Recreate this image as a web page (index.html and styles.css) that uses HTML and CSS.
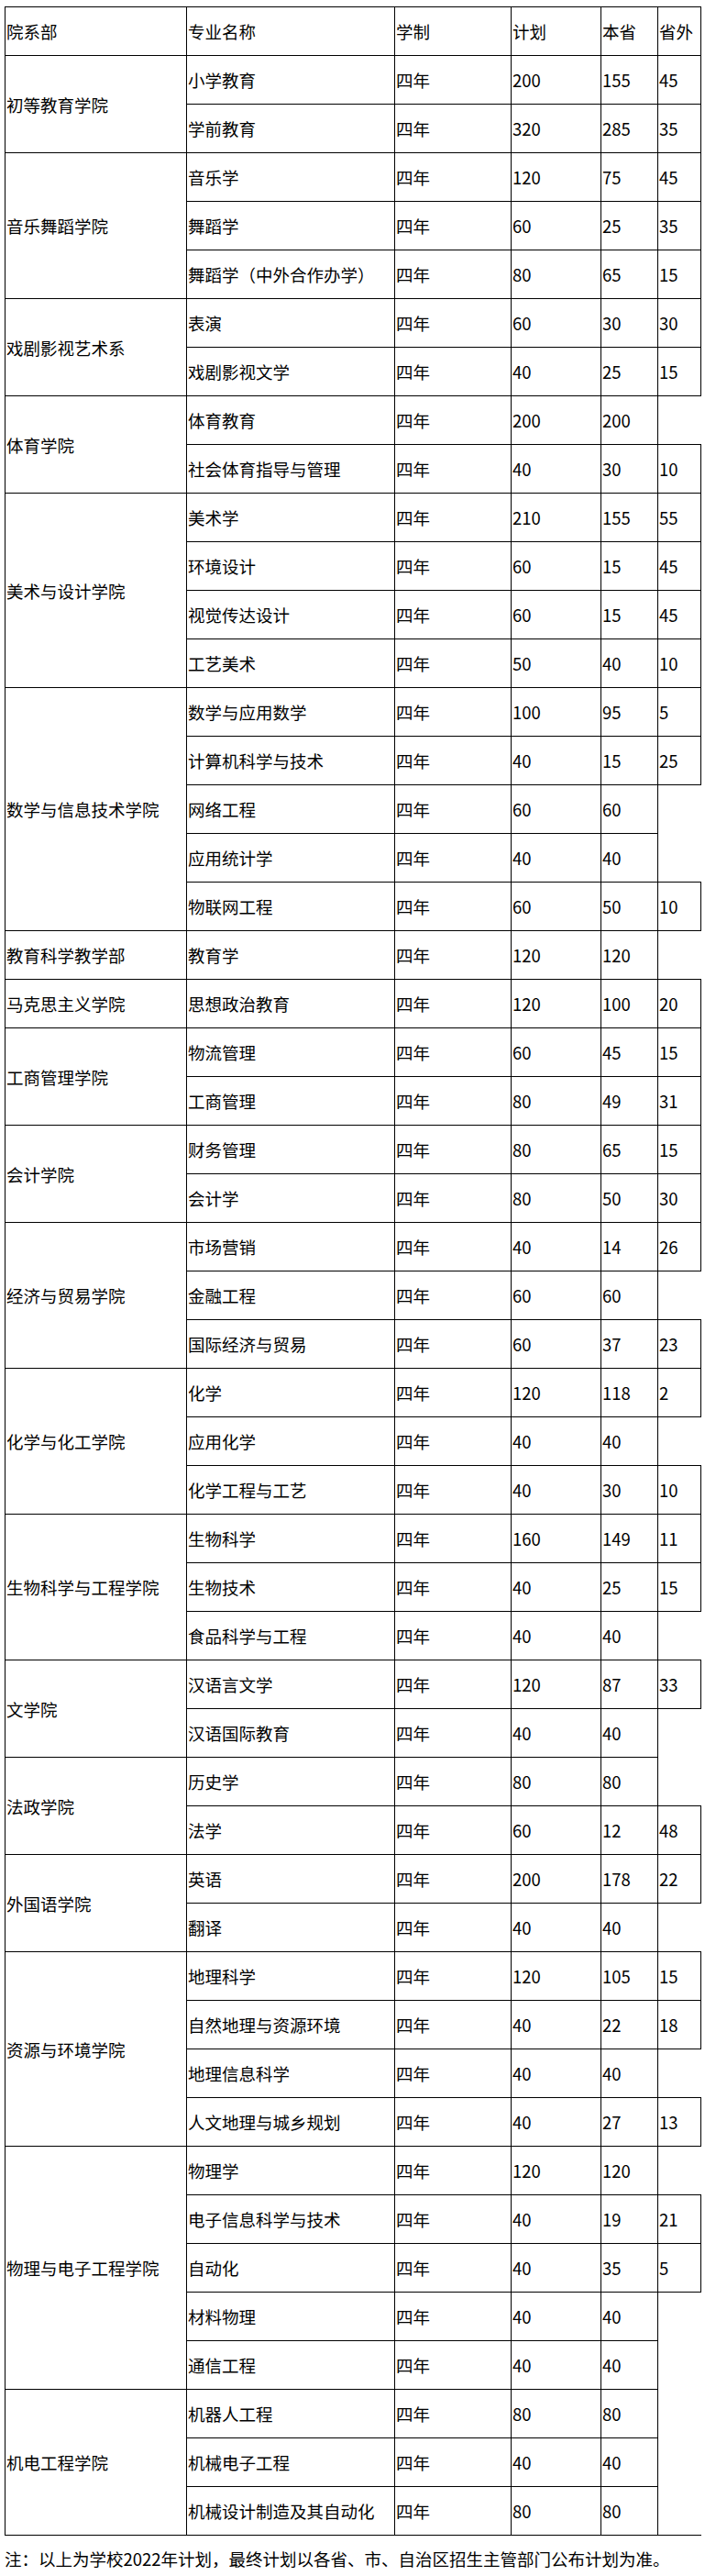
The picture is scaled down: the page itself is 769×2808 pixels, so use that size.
FILE: index.html
```html
<!DOCTYPE html>
<html lang="zh-CN">
<head>
<meta charset="utf-8">
<title>招生计划</title>
<link rel="stylesheet" href="styles.css">
</head>
<body>
<table class="plan">
<colgroup>
<col class="c1"><col class="c2"><col class="c3"><col class="c4"><col class="c5"><col class="c6">
</colgroup>
<tbody>
<tr><td>院系部</td><td>专业名称</td><td>学制</td><td>计划</td><td>本省</td><td>省外</td></tr>
<tr><td rowspan="2">初等教育学院</td><td>小学教育</td><td>四年</td><td>200</td><td>155</td><td>45</td></tr>
<tr><td>学前教育</td><td>四年</td><td>320</td><td>285</td><td>35</td></tr>
<tr><td rowspan="3">音乐舞蹈学院</td><td>音乐学</td><td>四年</td><td>120</td><td>75</td><td>45</td></tr>
<tr><td>舞蹈学</td><td>四年</td><td>60</td><td>25</td><td>35</td></tr>
<tr><td>舞蹈学（中外合作办学）</td><td>四年</td><td>80</td><td>65</td><td>15</td></tr>
<tr><td rowspan="2">戏剧影视艺术系</td><td>表演</td><td>四年</td><td>60</td><td>30</td><td>30</td></tr>
<tr><td>戏剧影视文学</td><td>四年</td><td>40</td><td>25</td><td>15</td></tr>
<tr><td rowspan="2">体育学院</td><td>体育教育</td><td>四年</td><td>200</td><td>200</td></tr>
<tr><td>社会体育指导与管理</td><td>四年</td><td>40</td><td>30</td><td>10</td></tr>
<tr><td rowspan="4">美术与设计学院</td><td>美术学</td><td>四年</td><td>210</td><td>155</td><td>55</td></tr>
<tr><td>环境设计</td><td>四年</td><td>60</td><td>15</td><td>45</td></tr>
<tr><td>视觉传达设计</td><td>四年</td><td>60</td><td>15</td><td>45</td></tr>
<tr><td>工艺美术</td><td>四年</td><td>50</td><td>40</td><td>10</td></tr>
<tr><td rowspan="5">数学与信息技术学院</td><td>数学与应用数学</td><td>四年</td><td>100</td><td>95</td><td>5</td></tr>
<tr><td>计算机科学与技术</td><td>四年</td><td>40</td><td>15</td><td>25</td></tr>
<tr><td>网络工程</td><td>四年</td><td>60</td><td>60</td></tr>
<tr><td>应用统计学</td><td>四年</td><td>40</td><td>40</td></tr>
<tr><td>物联网工程</td><td>四年</td><td>60</td><td>50</td><td>10</td></tr>
<tr><td>教育科学教学部</td><td>教育学</td><td>四年</td><td>120</td><td>120</td></tr>
<tr><td>马克思主义学院</td><td>思想政治教育</td><td>四年</td><td>120</td><td>100</td><td>20</td></tr>
<tr><td rowspan="2">工商管理学院</td><td>物流管理</td><td>四年</td><td>60</td><td>45</td><td>15</td></tr>
<tr><td>工商管理</td><td>四年</td><td>80</td><td>49</td><td>31</td></tr>
<tr><td rowspan="2">会计学院</td><td>财务管理</td><td>四年</td><td>80</td><td>65</td><td>15</td></tr>
<tr><td>会计学</td><td>四年</td><td>80</td><td>50</td><td>30</td></tr>
<tr><td rowspan="3">经济与贸易学院</td><td>市场营销</td><td>四年</td><td>40</td><td>14</td><td>26</td></tr>
<tr><td>金融工程</td><td>四年</td><td>60</td><td>60</td></tr>
<tr><td>国际经济与贸易</td><td>四年</td><td>60</td><td>37</td><td>23</td></tr>
<tr><td rowspan="3">化学与化工学院</td><td>化学</td><td>四年</td><td>120</td><td>118</td><td>2</td></tr>
<tr><td>应用化学</td><td>四年</td><td>40</td><td>40</td></tr>
<tr><td>化学工程与工艺</td><td>四年</td><td>40</td><td>30</td><td>10</td></tr>
<tr><td rowspan="3">生物科学与工程学院</td><td>生物科学</td><td>四年</td><td>160</td><td>149</td><td>11</td></tr>
<tr><td>生物技术</td><td>四年</td><td>40</td><td>25</td><td>15</td></tr>
<tr><td>食品科学与工程</td><td>四年</td><td>40</td><td>40</td></tr>
<tr><td rowspan="2">文学院</td><td>汉语言文学</td><td>四年</td><td>120</td><td>87</td><td>33</td></tr>
<tr><td>汉语国际教育</td><td>四年</td><td>40</td><td>40</td></tr>
<tr><td rowspan="2">法政学院</td><td>历史学</td><td>四年</td><td>80</td><td>80</td></tr>
<tr><td>法学</td><td>四年</td><td>60</td><td>12</td><td>48</td></tr>
<tr><td rowspan="2">外国语学院</td><td>英语</td><td>四年</td><td>200</td><td>178</td><td>22</td></tr>
<tr><td>翻译</td><td>四年</td><td>40</td><td>40</td></tr>
<tr><td rowspan="4">资源与环境学院</td><td>地理科学</td><td>四年</td><td>120</td><td>105</td><td>15</td></tr>
<tr><td>自然地理与资源环境</td><td>四年</td><td>40</td><td>22</td><td>18</td></tr>
<tr><td>地理信息科学</td><td>四年</td><td>40</td><td>40</td></tr>
<tr><td>人文地理与城乡规划</td><td>四年</td><td>40</td><td>27</td><td>13</td></tr>
<tr><td rowspan="5">物理与电子工程学院</td><td>物理学</td><td>四年</td><td>120</td><td>120</td></tr>
<tr><td>电子信息科学与技术</td><td>四年</td><td>40</td><td>19</td><td>21</td></tr>
<tr><td>自动化</td><td>四年</td><td>40</td><td>35</td><td>5</td></tr>
<tr><td>材料物理</td><td>四年</td><td>40</td><td>40</td></tr>
<tr><td>通信工程</td><td>四年</td><td>40</td><td>40</td></tr>
<tr><td rowspan="3">机电工程学院</td><td>机器人工程</td><td>四年</td><td>80</td><td>80</td></tr>
<tr><td>机械电子工程</td><td>四年</td><td>40</td><td>40</td></tr>
<tr><td>机械设计制造及其自动化</td><td>四年</td><td>80</td><td>80</td></tr>
</tbody>
</table>
<p class="note">注：以上为学校2022年计划，最终计划以各省、市、自治区招生主管部门公布计划为准。</p>
</body>
</html>
```
FILE: styles.css
```css
html, body {
  background: #ffffff;
}
body {
  margin: 7px 0 0 5px;
  font-family: "Noto Sans CJK SC", "Noto Sans", sans-serif;
  font-size: 18.5px;
  color: #000000;
}
.plan {
  border-collapse: collapse;
  table-layout: fixed;
  width: 759px;
  border-bottom: 1px solid #000000;
}
.c1 { width: 198px; }
.c2 { width: 227px; }
.c3 { width: 127px; }
.c4 { width: 98px; }
.c5 { width: 62px; }
.c6 { width: 47px; }
.plan tr {
  height: 53px;
}
.plan td {
  border: 1px solid #000000;
  padding: 0 1px;
  text-align: left;
  vertical-align: middle;
  white-space: nowrap;
  line-height: 24px;
}
.note {
  margin: 12px 0 0 0;
  line-height: 26px;
  white-space: nowrap;
}
```
